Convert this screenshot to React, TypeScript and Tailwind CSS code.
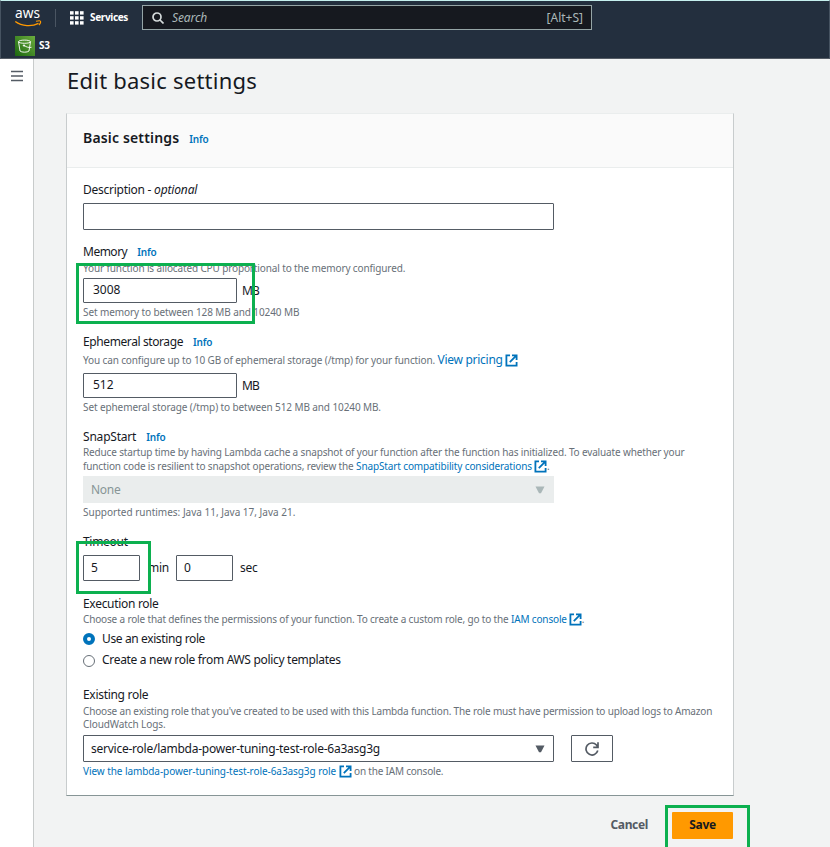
import type { ReactNode } from 'react';

function ExternalIcon() {
  return (
    <svg className="h-[13px] w-[13px] shrink-0" viewBox="0 0 13 13" fill="none" stroke="#0073bb" strokeWidth="1.8">
      <path d="M5 1.400H1.400v10.200h10.200V8" />
      <path d="M7 1.300h4.600v4.700M11 1.900 4.800 8.100" />
    </svg>
  );
}

function Info() {
  return <a className="ml-[10px] text-[10px] font-semibold tracking-[-0.2px] text-[#0073bb]">Info</a>;
}

function Label({ children }: { children: ReactNode }) {
  return <div className="flex h-5 items-center whitespace-pre text-[12px] text-[#16191f]">{children}</div>;
}

function Hint({ children }: { children: ReactNode }) {
  return <div className="flex h-[13px] items-center whitespace-pre text-[10px] text-[#687078]">{children}</div>;
}

function Box({ children, className }: { children?: ReactNode; className: string }) {
  return (
    <div className={'flex items-center rounded-[1px] border border-[#545b64] bg-white text-[12px] text-[#16191f] ' + className}>
      {children}
    </div>
  );
}

function Caret({ className }: { className: string }) {
  return (
    <svg className={'h-2 w-[10px] ' + className} viewBox="0 0 10 8" fill="currentColor">
      <path d="M0.500 0.500h9L6 7.200H4z" />
    </svg>
  );
}

function Header() {
  return (
    <header className="h-[59px] border-x border-t border-b border-x-[#465361] border-t-[#c5f0ee] border-b-[#545b64] bg-[#232f3e] text-white">
      <div className="flex h-[33px] items-center">
        <svg className="ml-[14px] h-[33px] w-[28px] overflow-visible" viewBox="0 0 28 33">
          <text x="0" y="17" fill="#fff" fontSize="14.5" fontFamily="Noto Sans" textLength="25" lengthAdjust="spacingAndGlyphs">aws</text>
          <path d="M0.300 20.500C7 25.500 17 25.800 23.500 22.300" fill="none" stroke="#f90" strokeWidth="1.4" />
          <path d="M21 20.300c1.600-.5 4.200-.6 4.500-.1.3.6-.4 2.600-1.600 3.800" fill="none" stroke="#f90" strokeWidth="1.1" />
        </svg>
        <div className="ml-3 h-[18px] w-px bg-[#4a5562]" />
        <svg className="ml-[14px] h-[14px] w-[14px]" viewBox="0 0 14 14" fill="#fff">
          {[0, 5, 10].map((y) => [0, 5, 10].map((x) => <rect key={x + '-' + y} x={x} y={y + 0.2} width="3.6" height="3.4" />))}
        </svg>
        <span className="ml-[6px] w-[52px] text-[10px] font-bold tracking-[-0.35px]">Services</span>
        <div className="flex h-[25px] w-[450px] items-center border border-[#95a5a6] bg-[#16191f] pr-2 text-[12px] text-[#aab7b8]">
          <svg className="ml-[9px] h-3 w-3" viewBox="0 0 12 12" fill="none" stroke="#d5dbdb" strokeWidth="1.7">
            <circle cx="5" cy="5" r="4" />
            <path d="m8 8 3.500 3.500" />
          </svg>
          <span className="ml-2 flex-1 italic tracking-[-0.1px]">Search</span>
          <span>[Alt+S]</span>
        </div>
      </div>
      <div className="ml-[14px] mt-[2px] flex h-5 items-center">
        <svg className="h-5 w-5" viewBox="0 0 20 20">
          <defs>
            <linearGradient id="bucket" x1="0" y1="1" x2="1" y2="0">
              <stop stopColor="#1b660f" />
              <stop offset="1" stopColor="#6cae3e" />
            </linearGradient>
          </defs>
          <rect width="20" height="20" fill="url(#bucket)" />
          <g fill="none" stroke="#fff" strokeWidth="0.9">
            <ellipse cx="9.500" cy="5.700" rx="6" ry="1.600" />
            <path d="M3.500 5.700 5 15c1.500 1.600 7.500 1.600 9 0l1.500-9.300M9 9.500c2 1.500 5.500 2.500 7.500 1.800" />
            <circle cx="9" cy="9.500" r="0.700" fill="#fff" />
          </g>
        </svg>
        <span className="ml-1 pb-px text-[10px] font-bold tracking-[-0.2px]">S3</span>
      </div>
    </header>
  );
}

export default function App() {
  return (
    <div className="relative h-[847px] w-[830px] overflow-hidden bg-[#f2f3f3] font-['Noto_Sans','Open_Sans',sans-serif]">
      <Header />
      <div className="flex h-[788px]">
        <aside className="w-[34px] border-r border-[#c8cbcb] bg-white pl-[11px] pt-[11px]">
          <svg className="h-[12px] w-3" viewBox="0 0 12 12" stroke="#545b64" strokeWidth="1.6">
            <path d="M0 1.500h12M0 6h12M0 10.500h12" />
          </svg>
        </aside>
        <main className="pl-8">
          <h1 className="ml-px flex h-[54px] items-center pb-[11px] text-[22px] tracking-[0.23px] text-[#16191f]">Edit basic settings</h1>
          <section className="h-[683px] w-[668px] border border-x-[#c8cccd] border-b-[#879596] border-t-[#eaeded] bg-white">
            <div className="flex h-[54px] items-center border-b border-[#eaeded] bg-[#fafafa] pb-1.5 pl-4">
              <h2 className="text-[14px] font-semibold tracking-[0.16px] text-[#16191f]">Basic settings</h2>
              <span className="mt-[3px] flex"><Info /></span>
            </div>
            <div className="pl-4 pt-3">
              <Label>
                <span className="tracking-[-0.26px]">Description - </span>
                <i className="tracking-[-0.15px]">optional</i>
              </Label>
              <Box className="mt-[3px] h-[27px] w-[471px]" />

              <div className="mt-3">
                <Label><span className="tracking-[-0.5px]">Memory</span><Info /></Label>
              </div>
              <Hint><span className="tracking-[-0.13px]">Your function is allocated CPU proportional to the memory configured.</span></Hint>
              <div className="mt-[3px] flex items-center text-[12px] text-[#16191f]">
                <Box className="h-[25px] w-[154px] pl-[9px] pb-px">3008</Box>
                <span className="ml-[5px] tracking-[-0.9px]">MB</span>
              </div>
              <div className="mt-[3px]">
                <Hint><span className="tracking-[-0.1px]">Set memory to between 128 MB and 10240 MB</span></Hint>
              </div>

              <div className="mt-[13px]">
                <Label><span className="tracking-[-0.4px]">Ephemeral storage</span><Info /></Label>
              </div>
              <div className="mt-[1.500px]">
                <Hint>
                  <span className="tracking-[-0.125px]">You can configure up to 10 GB of ephemeral storage (/tmp) for your function. </span>
                  <a className="mr-[2px] text-[12px] tracking-[-0.28px] text-[#0073bb]">View pricing</a>
                  <ExternalIcon />
                </Hint>
              </div>
              <div className="mt-[6.500px] flex items-center text-[12px] text-[#16191f]">
                <Box className="h-[25px] w-[154px] pl-[9px] pb-px">512</Box>
                <span className="ml-[5px] tracking-[-0.9px]">MB</span>
              </div>
              <div className="mt-[3px]">
                <Hint><span className="tracking-[-0.1px]">Set ephemeral storage (/tmp) to between 512 MB and 10240 MB.</span></Hint>
              </div>

              <div className="mt-[13px]">
                <Label><span className="tracking-[-0.2px]">SnapStart</span><Info /></Label>
              </div>
              <div className="-mt-px">
                <Hint><span className="tracking-[-0.15px]">Reduce startup time by having Lambda cache a snapshot of your function after the function has initialized. To evaluate whether your</span></Hint>
              </div>
              <div className="mt-px">
                <Hint>
                  <span className="tracking-[-0.145px]">function code is resilient to snapshot operations, review the </span>
                  <a className="mr-[2px] tracking-[-0.13px] text-[#0073bb]">SnapStart compatibility considerations</a>
                  <ExternalIcon />.
                </Hint>
              </div>
              <div className="mt-[3px] flex h-[27px] w-[471px] items-center justify-between bg-[#eaeded] pl-2 pr-[9px] text-[12px] tracking-[-0.3px] text-[#879596]">
                None
                <Caret className="text-[#aab7b8]" />
              </div>
              <div className="mt-[3px]"><Hint>Supported runtimes: Java 11, Java 17, Java 21.</Hint></div>

              <div className="mt-[13px]"><Label><span className="tracking-[-0.3px]">Timeout</span></Label></div>
              <div className="mt-[3px] flex items-center text-[12px] tracking-[-0.3px] text-[#16191f]">
                <Box className="h-[26px] w-[57px] pl-[7px]">5</Box>
                <span className="ml-2 w-[28px]">min</span>
                <Box className="h-[26px] w-[57px] pl-[7px]">0</Box>
                <span className="ml-[7px]">sec</span>
              </div>

              <div className="mt-[13px]"><Label><span className="tracking-[-0.3px]">Execution role</span></Label></div>
              <div className="-mt-px">
                <Hint>
                  <span className="tracking-[-0.155px]">Choose a role that defines the permissions of your function. To create a custom role, go to the <a className="text-[#0073bb]">IAM console</a></span>
                  <span className="ml-[2px] flex"><ExternalIcon /></span>.
                </Hint>
              </div>
              <div className="mt-[3px]">
                <Label>
                  <span className="mr-[7px] h-3 w-3 rounded-full border-4 border-[#0073bb] bg-white" />
                  <span className="tracking-[-0.38px]">Use an existing role</span>
                </Label>
              </div>
              <div className="mt-px">
                <Label>
                  <span className="mr-[7px] mt-px h-3 w-3 rounded-full border border-[#687078] bg-white" />
                  <span className="tracking-[-0.31px]">Create a new role from AWS policy templates</span>
                </Label>
              </div>

              <div className="mt-[15px]"><Label><span className="tracking-[-0.3px]">Existing role</span></Label></div>
              <Hint><span className="tracking-[-0.165px]">Choose an existing role that you've created to be used with this Lambda function. The role must have permission to upload logs to Amazon</span></Hint>
              <Hint><span className="tracking-[-0.1px]">CloudWatch Logs.</span></Hint>
              <div className="mt-1 flex">
                <Box className="h-[27px] w-[471px] justify-between pl-[7px] pr-2 tracking-[-0.245px]">
                  service-role/lambda-power-tuning-test-role-6a3asg3g
                  <Caret className="text-[#545b64]" />
                </Box>
                <Box className="ml-[17px] h-[27px] w-[42px] justify-center">
                  <svg className="h-[14px] w-[14px]" viewBox="0 0 14 14" fill="none" stroke="#545b64" strokeWidth="1.7">
                    <path d="M12.800 8.600A6 6 0 1 1 11.500 3L12.700 4.800M13 0.300v5H8.200" />
                  </svg>
                </Box>
              </div>
              <div className="mt-[3px]">
                <Hint>
                  <a className="mr-[3px] tracking-[-0.07px] text-[#0073bb]">View the lambda-power-tuning-test-role-6a3asg3g role</a>
                  <ExternalIcon />
                  <span className="ml-[2px] tracking-[-0.2px]">on the IAM console.</span>
                </Hint>
              </div>
            </div>
          </section>
          <div className="mr-px mt-4 flex h-[27px] items-center justify-end text-[12px] font-bold tracking-[-0.35px]">
            <span className="mr-6 pb-px text-[#545b64]">Cancel</span>
            <button className="h-[27px] w-[61px] rounded-[1px] bg-[#f90] pb-px font-bold text-[#16191f]">Save</button>
          </div>
        </main>
      </div>
      <div className="absolute left-[76px] top-[263px] h-[61px] w-[179px] border-3 border-[#0cb04f]" />
      <div className="absolute left-[76px] top-[541px] h-[53px] w-[75px] border-3 border-[#0cb04f]" />
      <div className="absolute left-[665px] top-[805px] h-[45px] w-[85px] border-3 border-[#0cb04f]" />
    </div>
  );
}
